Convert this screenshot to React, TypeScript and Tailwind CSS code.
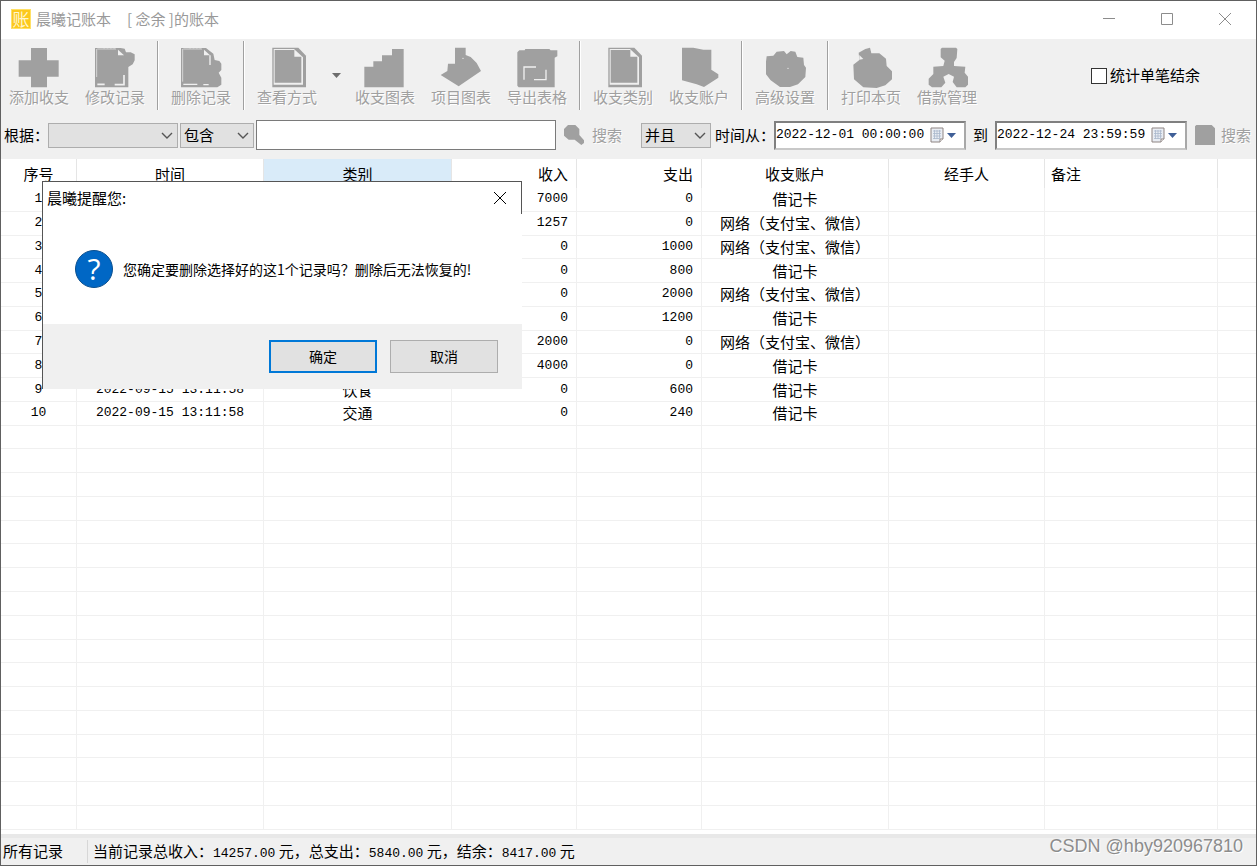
import type { ReactNode } from 'react';

type Row = {
  time: string;
  category: string;
  income: number;
  expense: number;
  account: string;
};

const CARD = '借记卡';
const ONLINE = '网络（支付宝、微信）';

const rows: Row[] = [
  { time: '', category: '', income: 7000, expense: 0, account: CARD },
  { time: '', category: '', income: 1257, expense: 0, account: ONLINE },
  { time: '', category: '', income: 0, expense: 1000, account: ONLINE },
  { time: '', category: '', income: 0, expense: 800, account: CARD },
  { time: '', category: '', income: 0, expense: 2000, account: ONLINE },
  { time: '', category: '', income: 0, expense: 1200, account: CARD },
  { time: '', category: '', income: 2000, expense: 0, account: ONLINE },
  { time: '', category: '', income: 4000, expense: 0, account: CARD },
  { time: '2022-09-15 13:11:58', category: '饮食', income: 0, expense: 600, account: CARD },
  { time: '2022-09-15 13:11:58', category: '交通', income: 0, expense: 240, account: CARD },
];

const ROW_COUNT = 27;

const mono = "font-['Liberation_Mono',monospace] text-[13px]";

const pageIcon = (
  <>
    <path d="M19 2H97L120 26V121H19Z" />
    <path d="M23 6H84L111 31V113H23Z" fill="#f0f0f0" />
    <path d="M26 9H85V29H106V107H26Z" />
  </>
);

const icons: Record<string, ReactNode> = {
  add: <path d="M39 3H87V40H122V89H87V121H39V89H2V40H39Z" />,
  edit: (
    <>
      <path d="M3 3H80L92 5L96 16H110L122 22V40L116 52L103 60V121H3Z" />
      <path d="M72 8V25H90Z" fill="#f0f0f0" />
      <path d="M8 6V90M10 6H66" fill="none" stroke="#f0f0f0" strokeWidth="2" />
      <path d="M10 112H32M90 84V113H62" fill="none" stroke="#f0f0f0" strokeWidth="5" />
      <path d="M28 2H66" fill="none" stroke="#f0f0f0" strokeWidth="4" strokeDasharray="5 5" />
    </>
  ),
  remove: (
    <>
      <path d="M3 3H78L100 20L104 39L118 42L124 50V69L116 77L124 92V113L112 121H3Z" />
      <path d="M72 8V25H90Z" fill="#f0f0f0" />
      <path d="M8 6V104M10 6H66" fill="none" stroke="#f0f0f0" strokeWidth="2" />
      <path d="M10 112H52M90 25V54M70 113H86" fill="none" stroke="#f0f0f0" strokeWidth="4" />
      <path d="M28 2H66" fill="none" stroke="#f0f0f0" strokeWidth="4" strokeDasharray="5 5" />
    </>
  ),
  page: pageIcon,
  chart: <path d="M1 59H28V43H54V25H84V6H119V121H1Z" />,
  project: (
    <>
      <path d="M45 2H77V24L92 30L110 48L123 72L56 118L2 84L22 72L24 50H45Z" />
      <circle cx="69" cy="34" r="2" fill="#f0f0f0" />
    </>
  ),
  exportSheet: (
    <>
      <path d="M4 16L10 10H26L28 6H100L104 10H124V28L116 32V121H8L4 116Z" />
      <path d="M24 98V60H60M90 68V98H54" fill="none" stroke="#f0f0f0" strokeWidth="4" />
    </>
  ),
  account: <path d="M12 2H46L76 8H100V68L121 82V92L78 120L56 112L12 100Z" />,
  settings: (
    <>
      <path d="M6 44L8 28L28 26L38 14L60 12L68 22L80 12L94 14L100 30L118 32L120 54L126 62L124 90L102 112L78 120H48L20 100L6 82Z" />
      <circle cx="72" cy="64" r="2" fill="#f0f0f0" />
    </>
  ),
  print: (
    <>
      <path d="M46 6L60 2L64 19H88L108 35L110 57L126 73V97L106 115L80 123L40 121L12 97L10 53L28 39L26 17Z" />
      <path d="M28 38V24L40 36Z" fill="#f0f0f0" />
    </>
  ),
  loan: (
    <path d="M48 2H90L94 6L92 33L84 45V57L118 59L116 77L126 89V113L118 121H92L80 105L84 89L68 81L52 89L58 107L46 121H18L8 113V95L22 81V59L52 57L56 41L44 31V6Z" />
  ),
};

const ToolButton = ({ icon, label }: { icon: string; label: string }) => (
  <button className="flex w-[76px] shrink-0 flex-col items-center text-[#a0a0a0] [text-shadow:1px_1px_0_#fff]">
    <svg className="h-[42px] w-[42px]" viewBox="0 0 126 126" fill="#a0a0a0">
      {icons[icon]}
    </svg>
    <span className="text-[15px] leading-4">{label}</span>
  </button>
);

const Separator = () => <div className="mx-1 h-[69px] w-[2px] shrink-0 border-l border-[#a0a0a0] bg-white" />;

const Dropdown = ({ label, value, width }: { label: string; value: string; width: string }) => (
  <div className={`relative shrink-0 ${width}`}>
    <select
      aria-label={label}
      defaultValue={value}
      className="h-[25px] w-full appearance-none border border-[#adadad] bg-[#e1e1e1] pl-[3px] text-[15px] leading-[22px] text-black"
    >
      <option value={value}>{value}</option>
    </select>
    <svg className="pointer-events-none absolute top-[9px] right-[5px] h-[7px] w-3" viewBox="0 0 12 7">
      <path d="M1 1L6 6L11 1" fill="none" stroke="#555" strokeWidth="1.4" />
    </svg>
  </div>
);

const DateField = ({ label, value }: { label: string; value: string }) => (
  <div className="flex h-[29px] w-[192px] shrink-0 items-center border-2 border-t-[#808080] border-r-[#a8a8a8] border-b-[#c8c8c8] border-l-[#808080] bg-white">
    <input
      aria-label={label}
      defaultValue={value}
      className={`w-[154px] bg-transparent text-black ${mono}`}
    />
    <button aria-label="日历" className="flex items-center gap-[3px]">
      <svg className="h-4 w-[14px]" viewBox="0 0 14 16">
        <path d="M1 1H13V12L10 15H1Z" fill="#e9edf3" stroke="#8f8583" />
        <path d="M3 4H11M3 6.500H11M3 9H11M3 11.500H9M4.500 3V12M7 3V12M9.500 3V12" stroke="#a9b7cc" strokeWidth=".8" />
        <path d="M10 15V12H13" fill="#fff" stroke="#8f8583" />
      </svg>
      <svg className="h-[5px] w-[9px]" viewBox="0 0 9 5">
        <path d="M0 0H9L4.500 5Z" fill="#3f5f97" />
      </svg>
    </button>
  </div>
);

const TitleBar = () => (
  <header className="flex h-[38px] shrink-0 items-center bg-white pb-[2px] pl-[10px] text-[#999]">
    <span className="flex h-5 w-5 items-center justify-center border border-[#ffe066] bg-[#fcc81c] text-[17px] leading-5 text-[#fff6cf]">
      账
    </span>
    <h1 className="ml-[5px] text-[15px] whitespace-pre">
      晨曦记账本<span className="ml-4">[ 念余 ]的账本</span>
    </h1>
    <div className="ml-auto flex h-full">
      <button aria-label="最小化" className="flex w-[58px] items-center justify-center">
        <svg className="h-3 w-3" viewBox="0 0 12 12" stroke="#8c8c8c" fill="none">
          <path d="M0 5.500H12" />
        </svg>
      </button>
      <button aria-label="最大化" className="flex w-[58px] items-center justify-center">
        <svg className="h-3 w-3" viewBox="0 0 12 12" stroke="#8c8c8c" fill="none">
          <path d="M.5 .5H11.500V11.500H.5Z" />
        </svg>
      </button>
      <button aria-label="关闭" className="mr-[2px] flex w-[58px] items-center justify-center">
        <svg className="h-3 w-3" viewBox="0 0 12 12" stroke="#8c8c8c" fill="none">
          <path d="M0 0L12 12M12 0L0 12" />
        </svg>
      </button>
    </div>
  </header>
);

const Toolbar = () => (
  <div className="flex h-[76px] shrink-0 items-center pb-[3px]">
    <ToolButton icon="add" label="添加收支" />
    <ToolButton icon="edit" label="修改记录" />
    <Separator />
    <ToolButton icon="remove" label="删除记录" />
    <Separator />
    <ToolButton icon="page" label="查看方式" />
    <button aria-label="更多查看方式" className="flex w-[22px] shrink-0 justify-center">
      <svg className="h-[5px] w-[9px]" viewBox="0 0 9 5">
        <path d="M0 0H9L4.500 5Z" fill="#6d6d6d" />
      </svg>
    </button>
    <ToolButton icon="chart" label="收支图表" />
    <ToolButton icon="project" label="项目图表" />
    <ToolButton icon="exportSheet" label="导出表格" />
    <Separator />
    <ToolButton icon="page" label="收支类别" />
    <ToolButton icon="account" label="收支账户" />
    <Separator />
    <ToolButton icon="settings" label="高级设置" />
    <Separator />
    <ToolButton icon="print" label="打印本页" />
    <ToolButton icon="loan" label="借款管理" />
    <label className="mr-14 ml-auto flex shrink-0 items-center gap-[3px] text-[15px] text-black">
      <input type="checkbox" className="h-4 w-4 appearance-none border border-[#333] bg-white" />
      统计单笔结余
    </label>
  </div>
);

const SearchBar = () => (
  <div className="flex h-11 shrink-0 items-center pb-1 pl-[3px] text-[15px] whitespace-nowrap text-black">
    <span className="w-11 shrink-0">根据：</span>
    <Dropdown label="根据" value="" width="w-[130px]" />
    <div className="ml-[2px]">
      <Dropdown label="匹配方式" value="包含" width="w-[74px]" />
    </div>
    <input
      aria-label="关键字"
      className="ml-[2px] h-[30px] min-w-0 flex-1 border border-[#7a7a7a] bg-white px-1"
    />
    <button className="ml-2 flex shrink-0 items-center gap-2 text-[#a0a0a0] [text-shadow:1px_1px_0_#fff]">
      <svg className="h-5 w-5" viewBox="0 0 60 60" fill="#a0a0a0">
        <path d="M12 0H34L46 12V30L60 46V54L52 60L32 44H14L0 32V12Z" />
      </svg>
      搜索
    </button>
    <div className="mr-1 ml-[19px]">
      <Dropdown label="条件关系" value="并且" width="w-[70px]" />
    </div>
    <span className="w-[59px] shrink-0">时间从：</span>
    <DateField label="开始时间" value="2022-12-01 00:00:00" />
    <span className="mx-[7px] shrink-0">到</span>
    <DateField label="结束时间" value="2022-12-24 23:59:59" />
    <button className="mr-[5px] ml-2 flex shrink-0 items-center gap-[6px] text-[#a0a0a0] [text-shadow:1px_1px_0_#fff]">
      <svg className="h-5 w-5" viewBox="0 0 60 60" fill="#a0a0a0">
        <path d="M4 0H50L60 10V60H0V4Z" />
      </svg>
      搜索
    </button>
  </div>
);

const cell = 'border-r border-b border-[#f0f0f0] p-0';
const head = 'h-[29px] border-r border-[#e5e5e5] p-0 font-normal';

const RecordTable = () => (
  <div className="min-h-0 flex-1 overflow-hidden bg-white pb-1">
    <table className="h-full w-full table-fixed border-separate border-spacing-0 text-[15px] leading-[22px] whitespace-nowrap text-black">
      <colgroup>
        <col className="w-[76px]" />
        <col className="w-[187px]" />
        <col className="w-[188px]" />
        <col className="w-[125px]" />
        <col className="w-[125px]" />
        <col className="w-[187px]" />
        <col className="w-[156px]" />
        <col className="w-[173px]" />
        <col />
      </colgroup>
      <thead>
        <tr>
          <th className={head}>序号</th>
          <th className={head}>时间</th>
          <th className={`${head} bg-[#d9ebf9]`}>类别</th>
          <th className={`${head} pr-2 text-right`}>收入</th>
          <th className={`${head} pr-2 text-right`}>支出</th>
          <th className={head}>收支账户</th>
          <th className={head}>经手人</th>
          <th className={`${head} pl-[6px] text-left`}>备注</th>
          <th className="p-0" />
        </tr>
      </thead>
      <tbody className="text-center">
        {Array.from({ length: ROW_COUNT }, (_, i) => {
          const row = rows[i];
          return (
            <tr key={i}>
              <td className={`${cell} ${mono}`}>{row ? i + 1 : '\u00a0'}</td>
              <td className={`${cell} ${mono}`}>{row?.time}</td>
              <td className={cell}>{row?.category}</td>
              <td className={`${cell} ${mono} pr-2 text-right`}>{row?.income}</td>
              <td className={`${cell} ${mono} pr-2 text-right`}>{row?.expense}</td>
              <td className={cell}>{row?.account}</td>
              <td className={cell} />
              <td className={cell} />
              <td className="border-b border-[#f0f0f0] p-0" />
            </tr>
          );
        })}
      </tbody>
    </table>
  </div>
);

const StatusBar = () => (
  <footer className="flex h-[31px] shrink-0 items-center border-t-4 border-[#e8e8e8] pl-[2px] text-[15px] whitespace-pre text-black">
    <span className="w-[84px] shrink-0">所有记录</span>
    <p className="border-l border-[#d7d7d7] pl-[5px]">
      当前记录总收入：<span className={mono}>14257.00</span> 元，总支出：<span className={mono}>5840.00</span>
      {' '}元，结余：<span className={mono}>8417.00</span> 元
    </p>
    <span className="mr-[13px] mb-3 ml-auto font-['Liberation_Sans',sans-serif] text-[18px] leading-5 text-[#8c8c8c] [text-shadow:1px_1px_0_#fff]">
      CSDN @hby920967810
    </span>
  </footer>
);

const ConfirmDialog = () => (
  <div
    role="dialog"
    aria-labelledby="confirm-title"
    className="absolute top-[180px] left-[41px] flex w-[480px] flex-col border-l border-[#555] bg-white text-black"
  >
    <div className="flex h-[33px] items-center border-t border-r border-[#555] pl-1">
      <h2 id="confirm-title" className="text-[15px]">晨曦提醒您:</h2>
      <button aria-label="关闭" className="mr-[14px] ml-auto">
        <svg className="h-[14px] w-[14px]" viewBox="0 0 14 14" stroke="#000" fill="none">
          <path d="M1 1L13 13M13 1L1 13" />
        </svg>
      </button>
    </div>
    <div className="flex h-[110px] items-center pl-8">
      <span className="flex h-[38px] w-[38px] items-center justify-center rounded-full border border-[#0a4f8f] bg-[#0067c5] font-['Open_Sans',sans-serif] text-[30px] leading-9 text-white">
        ?
      </span>
      <p className="ml-[10px] text-[14px]">您确定要删除选择好的这1个记录吗？删除后无法恢复的!</p>
    </div>
    <div className="flex h-[65px] items-center justify-end gap-[13px] bg-[#f0f0f0] pr-6 text-[14px]">
      <button className="h-[33px] w-[108px] border-2 border-[#0078d7] bg-[#e1e1e1]">确定</button>
      <button className="h-[33px] w-[108px] border border-[#adadad] bg-[#e1e1e1]">取消</button>
    </div>
  </div>
);

export default function App() {
  return (
    <div className="relative flex h-screen flex-col overflow-hidden border border-[#606060] bg-[#f0f0f0] font-['Noto_Sans_CJK_SC',sans-serif]">
      <TitleBar />
      <Toolbar />
      <SearchBar />
      <RecordTable />
      <StatusBar />
      <ConfirmDialog />
    </div>
  );
}
